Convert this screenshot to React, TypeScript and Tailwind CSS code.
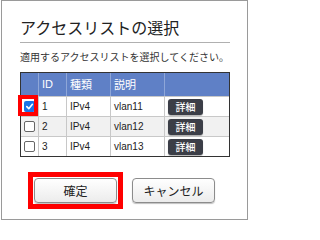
import React from "react";

const jp = { fontFamily: '"Noto Sans CJK JP", "Noto Sans", sans-serif' };
const lat = { fontFamily: '"Liberation Sans", "Noto Sans CJK JP", sans-serif' };

function Check({ checked }: { checked: boolean }) {
  if (checked) {
    return (
      <div className="w-[11px] h-[11px] rounded-[2px] bg-[#1a73e8] flex items-center justify-center">
        <svg width="9" height="9" viewBox="0 0 10 10">
          <path d="M2 5.2 L4.2 7.4 L8.2 2.6" stroke="#fff" strokeWidth="1.8" fill="none" strokeLinecap="round" strokeLinejoin="round" />
        </svg>
      </div>
    );
  }
  return <div className="w-[11px] h-[11px] rounded-[2px] border border-[#666] bg-white" />;
}

const rows = [
  { id: "1", type: "IPv4", desc: "vlan11", checked: true, bg: "bg-white" },
  { id: "2", type: "IPv4", desc: "vlan12", checked: false, bg: "bg-[#f1f1f1]" },
  { id: "3", type: "IPv4", desc: "vlan13", checked: false, bg: "bg-white" },
];

export default function App() {
  return (
    <div className="w-[250px] h-[223px] overflow-hidden bg-white">
      <div className="relative ml-[1px] w-[247px] h-[220px] border border-[#9a9a9a] bg-white pl-[18px] pr-[17px] pt-[16px] text-[#222]" style={jp}>
        <div className="text-[16px] leading-[20px] text-[#222]">アクセスリストの選択</div>
        <div className="mt-[5px] border-t border-[#b0b0b0]" />
        <div className="mt-[7px] text-[10px] leading-[14px] text-[#333]">適用するアクセスリストを選択してください。</div>

        <div className="mt-[8px] w-[210px] border border-[#333]">
          <div className="grid grid-cols-[17px_28px_44px_54px_65px] h-[23px] bg-[#5f80c6] text-white text-[11px]">
            <div />
            <div className="border-l border-[#8ea6d8] pl-[3px] flex items-center" style={lat}>ID</div>
            <div className="border-l border-[#8ea6d8] pl-[3px] flex items-center">種類</div>
            <div className="border-l border-[#8ea6d8] pl-[3px] flex items-center">説明</div>
            <div className="border-l border-[#8ea6d8]" />
          </div>
          {rows.map((r) => (
            <div key={r.id} className={`grid grid-cols-[17px_28px_44px_54px_65px] h-[20px] border-t border-[#c8c8c8] ${r.bg} text-[10px] text-[#222]`}>
              <div className="flex items-center justify-center">
                <Check checked={r.checked} />
              </div>
              <div className="border-l border-[#c8c8c8] pl-[3px] flex items-center" style={lat}>{r.id}</div>
              <div className="border-l border-[#c8c8c8] pl-[3px] flex items-center" style={lat}>{r.type}</div>
              <div className="border-l border-[#c8c8c8] pl-[3px] flex items-center" style={lat}>{r.desc}</div>
              <div className="border-l border-[#c8c8c8] pl-[3px] flex items-center">
                <div className="w-[35px] h-[16px] rounded-[3px] bg-[#3b3e47] text-white text-[10px] font-medium flex items-center justify-center shadow-[0_1px_1px_rgba(0,0,0,0.3)]">詳細</div>
              </div>
            </div>
          ))}
        </div>

        <div className="mt-[15px] flex items-start">
          <div className="ml-[8px] border-[5px] border-[#ff0000] p-[1px]">
            <div className="w-[83px] h-[25px] rounded-[4px] border border-[#8c8c8c] bg-gradient-to-b from-white to-[#ececec] shadow-[0_1px_1px_rgba(0,0,0,0.25)] flex items-center justify-center text-[12px] text-[#222]">確定</div>
          </div>
          <div className="ml-[9px] mt-[6px] w-[83px] h-[25px] rounded-[4px] border border-[#8c8c8c] bg-gradient-to-b from-white to-[#ececec] shadow-[0_1px_1px_rgba(0,0,0,0.25)] flex items-center justify-center text-[12px] text-[#222]">キャンセル</div>
        </div>

        <div className="absolute left-[16px] top-[94px] w-[20px] h-[21px] border-[4px] border-[#ff0000]" />
      </div>
    </div>
  );
}
